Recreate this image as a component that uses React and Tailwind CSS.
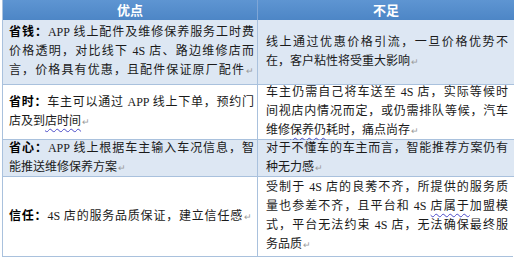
import React from "react";

const B = "border-[#a9c1dd]";

function Mark() {
  return <span className="text-[9px] text-[#9a9a9a] ml-[1px]">↵</span>;
}

function Wavy({ children }) {
  return (
    <span className="underline decoration-wavy decoration-[#4b4bc8] decoration-1 underline-offset-[3px]">
      {children}
    </span>
  );
}

function J({ children }) {
  return <div className="text-justify [text-align-last:justify] whitespace-nowrap">{children}</div>;
}

function L({ children }) {
  return <div className="text-left whitespace-nowrap">{children}</div>;
}

function Label({ children }) {
  return <span className="font-bold text-black">{children}</span>;
}

export default function App() {
  return (
    <div
      className="w-[515px] h-[259px] bg-white text-[#1a1a1a] text-[12px] leading-[19px]"
      style={{ fontFamily: '"Liberation Serif","Noto Sans CJK SC",serif' }}
    >
      <div className={`ml-[2px] w-[511px] grid grid-cols-[255px_256px] border-l border-r border-b ${B}`}>
        <div className="h-[20px] bg-gradient-to-b from-[#5e95d2] to-[#4d86c6] flex items-center justify-center text-white font-bold text-[13px] border-r border-[#7fa6d6]">
          优点
        </div>
        <div className="h-[20px] bg-gradient-to-b from-[#5e95d2] to-[#4d86c6] flex items-center justify-center text-white font-bold text-[13px]">
          不足
        </div>

        {/* Row 1 */}
        <div className={`h-[65px] bg-[#dde7f3] border-r border-b ${B} flex flex-col justify-center pl-[6px] pr-[3px]`}>
          <J><Label>省钱：</Label>APP 线上配件及维修保养服务工时费</J>
          <J>价格透明，对比线下 4S 店、路边维修店而</J>
          <J>言，价格具有优惠，且配件保证原厂配件<Mark /></J>
        </div>
        <div className={`h-[65px] bg-[#dde7f3] border-b ${B} flex flex-col justify-center pl-[8px] pr-[6px]`}>
          <J>线上通过优惠价格引流，一旦价格优势不</J>
          <L>在，客户粘性将受重大影响<Mark /></L>
        </div>

        {/* Row 2 */}
        <div className={`h-[55px] bg-white border-r border-b ${B} flex flex-col justify-center pl-[6px] pr-[3px]`}>
          <J><Label>省时：</Label>车主可以通过 APP 线上下单，预约门</J>
          <L>店及到<Wavy>店时间</Wavy><Mark /></L>
        </div>
        <div className={`h-[55px] bg-white border-b ${B} flex flex-col justify-center pl-[8px] pr-[6px]`}>
          <J>车主仍需自己将车送至 4S 店，实际等候时</J>
          <J>间视店内情况而定，或仍需排队等候，汽车</J>
          <L>维修<Wavy>保养仍</Wavy>耗时，痛点尚存<Mark /></L>
        </div>

        {/* Row 3 */}
        <div className={`h-[37px] bg-[#dde7f3] border-r border-b ${B} flex flex-col justify-center pl-[6px] pr-[3px]`}>
          <J><Label>省心：</Label>APP 线上根据车主输入车况信息，智</J>
          <L>能推送维修保养方案<Mark /></L>
        </div>
        <div className={`h-[37px] bg-[#dde7f3] border-b ${B} flex flex-col justify-center pl-[8px] pr-[6px]`}>
          <J>对于不懂车的车主而言，智能推荐方案仍有</J>
          <L>种无力感<Mark /></L>
        </div>

        {/* Row 4 */}
        <div className={`h-[79px] bg-white border-r ${B} flex flex-col justify-center pl-[6px] pr-[5px]`}>
          <J><Label>信任：</Label>4S 店的服务品质保证，建立信任感<Mark /></J>
        </div>
        <div className={`h-[79px] bg-white flex flex-col justify-center pl-[8px] pr-[6px]`}>
          <J>受制于 4S 店的良莠不齐，所提供的服务质</J>
          <J>量也参差不齐，且平台和 4S <Wavy>店属于</Wavy>加盟模</J>
          <J>式，平台无法约束 4S 店，无法确保最终服</J>
          <L>务品质<Mark /></L>
        </div>
      </div>
    </div>
  );
}
